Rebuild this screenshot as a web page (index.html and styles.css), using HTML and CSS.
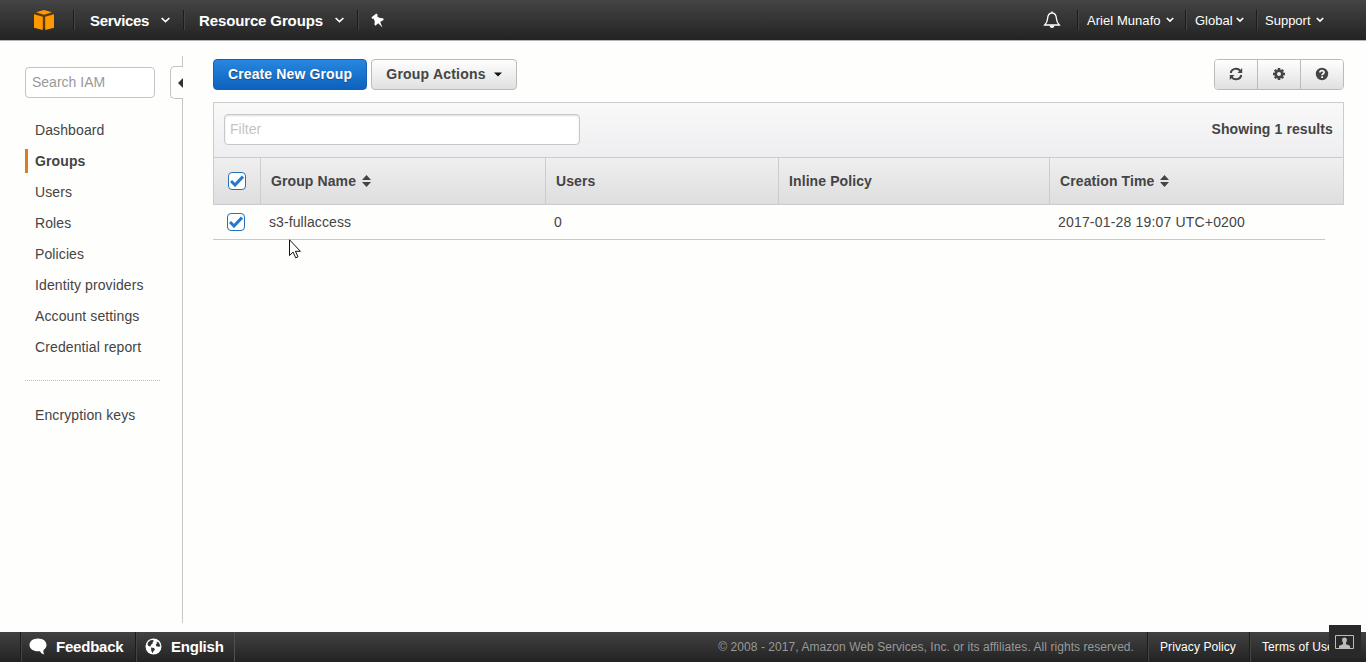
FILE: index.html
```html
<!DOCTYPE html>
<html lang="en">
<head>
<meta charset="utf-8">
<title>IAM Management Console</title>
<link rel="stylesheet" href="styles.css">
</head>
<body>
<header class="topnav">
  <a class="logo"><svg width="22" height="22" viewBox="0 0 22 22"><path d="M1 5l10-2.500L21 5v3L12.500 19h-3L1 8z" fill="#5c3a0c"/><g fill="#f90"><path d="M3 3.300L11 1l8 2.300L11 5.800z"/><path d="M1 5.200l8.800 2.600V21L1 18.800z"/><path d="M21 5.200l-8.800 2.600V21l8.800-2.200z"/></g></svg></a>
  <a class="nav-item services"><span class="services-text">Services</span><svg class="chev" width="9" height="6" viewBox="0 0 9 6"><path d="M.6 1l3.900 3.700L8.400 1"/></svg></a>
  <a class="nav-item resource"><span class="resource-text">Resource Groups</span><svg class="chev" width="9" height="6" viewBox="0 0 9 6"><path d="M.6 1l3.900 3.700L8.400 1"/></svg></a>
  <a class="nav-item pin"><svg width="13" height="15" viewBox="0 0 13 15"><path fill="#fff" d="M.5 4.300L5.300.5l1.500 1.600-.7 1.200L8.800 5l3.500.3.300 1.600L9.200 9l2.300 5.500-4.300-4.300-2.800 2.500-1-1.100.4-3.200-1.200-2.800-1.300.3z"/></svg></a>
  <span class="spacer"></span>
  <a class="bell"><svg width="18" height="18" viewBox="0 0 18 18"><path d="M9 1.800C5.800 2 4.700 4.500 4.600 7.500 4.500 10.500 3.500 12 1.700 14h14.600c-1.800-2-2.800-3.500-2.900-6.500C13.300 4.500 12.200 2 9 1.800z" fill="none" stroke="#fff" stroke-width="1.300"/><path d="M6.500 14.500h5Q11 17 9 17t-2.500-2.500zM8.300.6h1.400v1.500H8.300z" fill="#fff"/></svg></a>
  <a class="nav-item small account"><span class="account-text">Ariel Munafo</span><svg class="chev" width="8" height="6" viewBox="0 0 8 6"><path d="M.8 1L4 4l3.200-3"/></svg></a>
  <a class="nav-item small region"><span>Global</span><svg class="chev" width="8" height="6" viewBox="0 0 8 6"><path d="M.8 1L4 4l3.200-3"/></svg></a>
  <a class="nav-item small support"><span>Support</span><svg class="chev" width="8" height="6" viewBox="0 0 8 6"><path d="M.8 1L4 4l3.200-3"/></svg></a>
</header>

<div class="page">
  <aside class="sidebar">
    <input class="search" type="text" placeholder="Search IAM">
    <nav class="menu">
      <a>Dashboard</a>
      <a class="active">Groups</a>
      <a>Users</a>
      <a>Roles</a>
      <a>Policies</a>
      <a>Identity providers</a>
      <a>Account settings</a>
      <a>Credential report</a>
    </nav>
    <nav class="menu extra"><a>Encryption keys</a></nav>
    <span class="collapse"><svg width="5" height="10" viewBox="0 0 5 10"><path d="M5 0v10L0 5z" fill="#333"/></svg></span>
  </aside>

  <main class="content">
    <div class="toolbar">
      <button class="btn primary">Create New Group</button>
      <button class="btn actions">Group Actions<svg width="8" height="5" viewBox="0 0 8 5"><path d="M0 .5h8L4 4.500z" fill="#111"/></svg></button>
      <div class="tools">
        <button><svg width="14" height="14" viewBox="0 0 14 14"><g fill="none" stroke="#444" stroke-width="1.900"><path d="M1.700 6a5.300 4.800 0 0 1 9.500-2.300M12.300 8a5.300 4.800 0 0 1-9.500 2.300"/></g><path d="M13.200 1v5H8.500zM.8 13V8h4.700z" fill="#444"/></svg></button>
        <button><svg width="14" height="14" viewBox="0 0 14 14"><path fill="none" stroke="#444" stroke-width="2.600" d="M7 1v2M7 11v2M1 7h2M11 7h2M2.800 2.800l1.400 1.400M9.800 9.800l1.400 1.400M2.800 11.200l1.400-1.400M9.800 4.200l1.400-1.400"/><circle cx="7" cy="7" r="3.300" fill="none" stroke="#444" stroke-width="2.600"/></svg></button>
        <button><svg width="14" height="14" viewBox="0 0 14 14"><circle cx="7" cy="7" r="6.200" fill="#444"/><path d="M4.900 5.500C5 3 9.200 3.100 9.100 5.400 9 6.900 7.100 6.700 7.100 8.300" fill="none" stroke="#f4f4f4" stroke-width="1.700"/><path d="M6.200 9.300h1.800v1.700H6.200z" fill="#f4f4f4"/></svg></button>
      </div>
    </div>

    <section class="panel">
      <div class="filterbar">
        <input class="filter" type="text" placeholder="Filter">
        <span class="results">Showing 1 results</span>
      </div>
      <div class="row head">
        <div class="check"><span class="box"><svg width="14" height="12" viewBox="0 0 14 12"><path d="M1 6l4 4 8-8.500"/></svg></span></div>
        <div class="cell"><span class="h-name">Group Name</span><svg class="sort" width="9" height="12" viewBox="0 0 9 12"><path d="M0 5L4.500 0 9 5zM0 7h9l-4.500 5z"/></svg></div>
        <div class="cell">Users</div>
        <div class="cell">Inline Policy</div>
        <div class="cell"><span class="h-time">Creation Time</span><svg class="sort" width="9" height="12" viewBox="0 0 9 12"><path d="M0 5L4.500 0 9 5zM0 7h9l-4.500 5z"/></svg></div>
      </div>
    </section>
    <div class="row data">
      <div class="check"><span class="box"><svg width="14" height="12" viewBox="0 0 14 12"><path d="M1 6l4 4 8-8.500"/></svg></span></div>
      <div class="cell">s3-fullaccess</div>
      <div class="cell">0</div>
      <div class="cell"></div>
      <div class="cell time">2017-01-28 19:07 UTC+0200</div>
    </div>
  </main>
</div>

<footer class="footer">
  <a class="foot feedback"><svg width="18" height="17" viewBox="0 0 18 17"><path d="M9 .5C4 .5.500 3.300.500 7S4 13.300 9 13.300l2-.1c1 1.800 2.400 2.900 4.300 3.200-.8-1.300-1.100-2.700-.8-4.400 1.900-1.200 3-2.900 3-5C17.500 3.300 14 .5 9 .5z" fill="#fff"/></svg><span>Feedback</span></a>
  <a class="foot language"><svg width="17" height="17" viewBox="0 0 17 17"><circle cx="8.500" cy="8.500" r="8" fill="#fff"/><path d="M3 4.500L5.500 2.300l2.500-.3.800 1.300-1.300 1L7.800 5.500 6 6.800l-.5 1.700L3.500 8 2.500 6.500zM6 9.500l3 .5 1 1.500-1.700 2-.5 1.700-1.500-2.200zM11.300 3.500l2.500 1 1.700 3.800-2 .5-2.200-.5-.5-2 1.300-1z" fill="#333"/></svg><span>English</span></a>
  <span class="spacer foot-space"></span>
  <span class="copyright">© 2008 - 2017, Amazon Web Services, Inc. or its affiliates. All rights reserved.</span>
  <a class="foot legal privacy"><span>Privacy Policy</span></a>
  <a class="foot legal terms"><span>Terms of Use</span></a>
</footer>
<div class="badge"><svg width="19" height="14" viewBox="0 0 19 14"><path d="M.5.5h18v13H.5z" fill="none" stroke="#bbb"/><path d="M9.500 2.500c1.700 0 2.500 1 2.400 2.600-.1 1.500-.6 2-1 2.900l.2 1.200 3.900 1.500V13H4v-2.300l3.900-1.500L8.100 8c-.4-.9-.9-1.400-1-2.900-.1-1.600.7-2.600 2.400-2.600z" fill="#bbb"/></svg></div>
<svg class="cursor" width="13" height="20" viewBox="0 0 13 20"><path d="M.5.800v15.700l3.600-3.400 2.600 5.700 2.300-1-2.600-5.500h5z" fill="#fff" stroke="#111"/></svg>
</body>
</html>
```
FILE: styles.css
```css
* { box-sizing: border-box; }
body {
  margin: 0;
  height: 662px;
  overflow: hidden;
  display: flex;
  flex-direction: column;
  position: relative;
  background: #fefefd;
  color: #444;
  font-family: "Liberation Sans", Arial, sans-serif;
  font-size: 14px;
}
.spacer { flex: 1; }
svg { flex: none; }
input, button { font-family: inherit; font-size: 14px; }

.topnav {
  height: 41px;
  flex: none;
  display: flex;
  align-items: center;
  background: linear-gradient(#444, #232323);
  border-bottom: 1px solid #b5b5b5;
  color: #fff;
}
.logo { width: 73px; padding-left: 33px; display: flex; }
.nav-item {
  height: 20px;
  display: flex;
  align-items: center;
  border-left: 1px solid #1c1c1c;
  box-shadow: inset 1px 0 #444;
  font-size: 15px;
  font-weight: bold;
  white-space: nowrap;
}
.nav-item.small { font-size: 13px; font-weight: normal; }
.chev { fill: none; stroke: #fff; stroke-width: 1.7; }
.services { width: 110px; padding-left: 16px; gap: 12px; }
.services-text { letter-spacing: -.35px; }
.resource { width: 174px; padding-left: 15px; gap: 12px; }
.resource-text { letter-spacing: -.13px; }
.pin { padding-left: 13px; }
.bell { width: 34px; display: flex; }
.account { width: 108px; padding-left: 9px; gap: 5px; }
.account-text { letter-spacing: .05px; }
.region { width: 71px; padding-left: 9px; gap: 3px; }
.support { width: 110px; padding-left: 8px; gap: 5px; }

.page { flex: 1; display: flex; min-height: 0; }
.sidebar {
  position: relative;
  width: 183px;
  margin: 15px 0 9px;
  padding: 11px 22px 0 25px;
  border-right: 1px solid #c8c8c8;
}
.search {
  display: block;
  width: 130px;
  height: 31px;
  padding: 0 6px 1px;
  border: 1px solid #c4c4c4;
  border-radius: 4px;
  background: #fff;
}
.search::placeholder { color: #999; }
.menu { display: flex; flex-direction: column; gap: 7px; padding-top: 20px; letter-spacing: .11px; }
.menu a {
  height: 24px;
  line-height: 24px;
  padding-left: 7px;
  border-left: 3px solid transparent;
  white-space: nowrap;
}
.menu .active { border-color: #d5801a; font-weight: bold; }
.extra { width: 135px; margin-top: 21px; padding-top: 22px; border-top: 1px dotted #bbb; }
.collapse {
  position: absolute;
  left: 170px;
  top: 10px;
  width: 13px;
  height: 33px;
  display: flex;
  align-items: center;
  justify-content: flex-end;
  background: #fefefd;
  border: 1px solid #c4c4c4;
  border-right: 0;
  border-radius: 5px 0 0 5px;
}

.content { flex: 1; padding: 18px 22px 0 30px; }
.toolbar { display: flex; gap: 4px; height: 31px; margin-bottom: 12px; }
.btn {
  height: 31px;
  padding: 0 0 1px;
  border: 1px solid #bbb;
  border-radius: 4px;
  font-weight: bold;
  letter-spacing: .13px;
  color: #444;
  background: linear-gradient(#fff, #e0e0e0);
}
.primary {
  width: 154px;
  color: #fff;
  border-color: #1a5fae;
  background: linear-gradient(#2787e0, #0d62bd);
  text-shadow: 0 1px 1px #1b4a7a;
}
.actions { width: 146px; display: flex; align-items: center; justify-content: center; gap: 8px; letter-spacing: .2px; }
.tools { margin-left: auto; display: flex; border: 1px solid #bbb; border-radius: 4px; overflow: hidden; }
.tools button {
  width: 43px;
  padding: 0 0 1px;
  display: flex;
  align-items: center;
  justify-content: center;
  border: 0;
  border-left: 1px solid #bbb;
  background: linear-gradient(#fff, #e0e0e0);
}
.tools button:first-child { width: 42px; border-left: 0; }

.panel { border: 1px solid #ccc; }
.filterbar {
  height: 55px;
  display: flex;
  align-items: center;
  justify-content: space-between;
  padding: 0 10px 2px;
  border-bottom: 1px solid #ccc;
  background: linear-gradient(#f9f9fa, #eeeef0);
}
.filter {
  width: 356px;
  height: 31px;
  padding: 0 5px;
  border: 1px solid #c8c8c8;
  border-radius: 4px;
  box-shadow: inset 0 1px 2px #ddd;
  background: #fff;
}
.filter::placeholder { color: #c4c4c4; }
.results { font-weight: bold; letter-spacing: .1px; }
.row { display: grid; align-items: stretch; }
.head {
  height: 46px;
  grid-template-columns: 46px 285px 233px 271px 1fr;
  background: linear-gradient(#efefef, #dedee0);
  font-weight: bold;
  letter-spacing: .1px;
}
.cell, .check { display: flex; align-items: center; white-space: nowrap; }
.head .cell { border-left: 1px solid #ccc; padding-left: 10px; gap: 6px; }
.sort { fill: #444; }
.check { padding-left: 14px; }
.box {
  width: 18px;
  height: 18px;
  display: flex;
  align-items: center;
  justify-content: center;
  border: 1px solid #2a6fb5;
  border-radius: 4px;
  background: #fff;
}
.box path { fill: none; stroke: #2478cf; stroke-width: 3; }
.data {
  width: 1112px;
  height: 35px;
  grid-template-columns: 56px 285px 504px 0 1fr;
  border-bottom: 1px solid #c8c8c8;
  letter-spacing: .09px;
}
.data .time { letter-spacing: .18px; }

.footer {
  height: 30px;
  flex: none;
  display: flex;
  background: linear-gradient(#424242, #222);
  color: #fff;
  padding-left: 20px;
}
.foot {
  display: flex;
  align-items: center;
  border-left: 1px solid #1c1c1c;
  box-shadow: inset 1px 0 #444;
  font-size: 15px;
  font-weight: bold;
  letter-spacing: -.22px;
  padding-bottom: 1px;
  white-space: nowrap;
}
.feedback { width: 115px; padding-left: 8px; gap: 9px; }
.language { width: 99px; padding-left: 9px; gap: 9px; }
.foot-space { border-left: 1px solid #505050; }
.copyright { line-height: 30px; font-size: 12px; letter-spacing: .055px; color: #999; padding-right: 13px; white-space: nowrap; }
.legal { font-size: 12px; font-weight: normal; letter-spacing: .09px; padding: 0 0 0 12px; }
.privacy { width: 102px; }
.terms { width: 117px; }
.badge {
  position: absolute;
  left: 1329px;
  top: 625px;
  width: 32px;
  height: 33px;
  padding: 10px 0 0 6px;
  background: #292929;
}
.badge svg { display: block; }
.cursor { position: absolute; left: 289px; top: 239px; }
```
